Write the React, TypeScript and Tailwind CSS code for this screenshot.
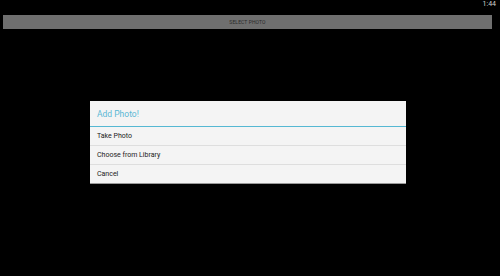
export default function App() {
  return (
    <div className="w-[500px] h-[276px] bg-black flex flex-col relative overflow-hidden" style={{ fontFamily: "Roboto, 'Noto Sans', sans-serif" }}>
      <div className="h-[15px] flex justify-end items-start pr-[4px]">
        <span className="text-[7px] leading-[8px] text-[#d0d0d0]">1:44</span>
      </div>
      <div className="mx-[3px] w-[489px] h-[14px] bg-[#6f6f6f] flex items-center justify-center">
        <span className="text-[5px] leading-none text-[#2a2a2a] tracking-[0.1px]">SELECT PHOTO</span>
      </div>
      <div className="flex-1 flex items-start justify-center pt-[72px]">
        <div className="w-[316px] ml-[-4px] bg-[#f4f4f4] border-b border-[#9a9a9a]">
          <div className="h-[26px] flex items-center pl-[7px] border-b border-[#56b8d3]">
            <span className="text-[8.5px] leading-[10px] text-[#5ab8d4]">Add Photo!</span>
          </div>
          <div className="h-[19px] flex items-center pl-[7px] border-b border-[#dedede]">
            <span className="text-[7px] leading-[9px] text-[#222]">Take Photo</span>
          </div>
          <div className="h-[19px] flex items-center pl-[7px] border-b border-[#dedede]">
            <span className="text-[7px] leading-[9px] text-[#222]">Choose from Library</span>
          </div>
          <div className="h-[18px] flex items-center pl-[7px]">
            <span className="text-[7px] leading-[9px] text-[#222]">Cancel</span>
          </div>
        </div>
      </div>
    </div>
  );
}
